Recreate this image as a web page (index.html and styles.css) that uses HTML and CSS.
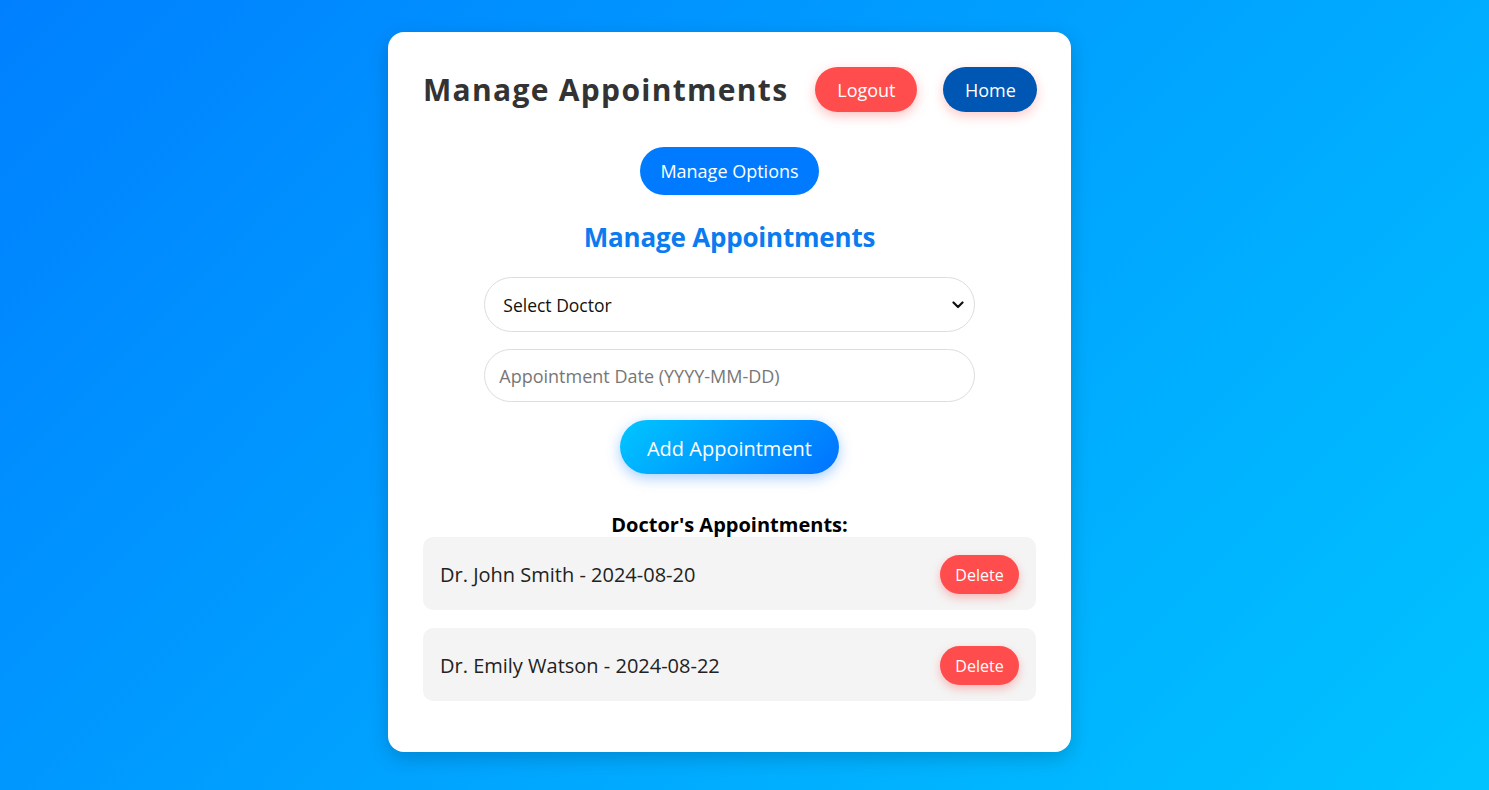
FILE: index.html
```html
<!DOCTYPE html>
<html>
<head>
<meta charset="utf-8">
<link rel="stylesheet" href="styles.css">
</head>
<body>
<div class="card">
  <div class="header">
    <h1 class="title">Manage Appointments</h1>
    <button class="btn btn-logout">Logout</button>
    <button class="btn btn-home">Home</button>
  </div>
  <button class="btn btn-options">Manage Options</button>
  <h2 class="subtitle">Manage Appointments</h2>
  <div class="form">
    <div class="select-wrap">
      <span class="select-text">Select Doctor</span>
      <svg class="chev" width="12" height="8" viewBox="0 0 12 8"><path d="M1.5 1.5 L6 6 L10.5 1.5" fill="none" stroke="#111" stroke-width="2.2" stroke-linecap="round" stroke-linejoin="round"/></svg>
    </div>
    <input class="date-input" type="text" placeholder="Appointment Date (YYYY-MM-DD)">
    <button class="btn btn-add">Add Appointment</button>
  </div>
  <h3 class="list-title">Doctor's Appointments:</h3>
  <ul class="list">
    <li class="item"><span class="item-text">Dr. John Smith - 2024-08-20</span><button class="btn btn-delete">Delete</button></li>
    <li class="item"><span class="item-text">Dr. Emily Watson - 2024-08-22</span><button class="btn btn-delete">Delete</button></li>
  </ul>
</div>
</body>
</html>
```
FILE: styles.css
```css
* { box-sizing: border-box; }
html, body { height: 100%; }
body {
  margin: 0;
  font-family: "Open Sans", "Noto Sans", sans-serif;
  background: linear-gradient(135deg, #0080ff 0%, #00c4ff 100%);
  display: flex;
  justify-content: center;
  align-items: flex-start;
  padding: 32px 30px 0 0;
}
.card {
  width: 683px;
  height: 720px;
  background: #fff;
  border-radius: 16px;
  box-shadow: 0 6px 20px rgba(0, 0, 0, 0.18);
  padding: 35px;
  display: flex;
  flex-direction: column;
  align-items: center;
}
.header {
  width: 100%;
  display: flex;
  align-items: center;
  height: 45px;
  flex-shrink: 0;
}
.title {
  margin: 0 27px 0 0;
  font-size: 30px;
  font-weight: 700;
  color: #333;
  letter-spacing: 1.3px;
  white-space: nowrap;
}
.btn {
  border: none;
  color: #fff;
  font-family: inherit;
  border-radius: 30px;
  cursor: pointer;
  flex-shrink: 0;
}
.btn-logout {
  width: 102px;
  height: 45px;
  background: #ff4d4d;
  font-size: 18px;
  box-shadow: 0 4px 12px rgba(255, 77, 77, 0.35);
  margin-right: 26px;
}
.btn-home {
  width: 94px;
  height: 45px;
  background: #0056b3;
  font-size: 18px;
  box-shadow: 0 4px 12px rgba(255, 77, 77, 0.3);
}
.btn-options {
  margin-top: 35px;
  width: 179px;
  height: 48px;
  background: #007bff;
  font-size: 18px;
}
.subtitle {
  margin: 24px 0 0;
  font-size: 26px;
  font-weight: 700;
  color: #0b7bf0;
  line-height: 36px;
  letter-spacing: -0.2px;
}
.form {
  width: 80%;
  margin-top: 22px;
  display: flex;
  flex-direction: column;
  align-items: center;
}
.select-wrap {
  width: 100%;
  height: 55px;
  border: 1px solid #ddd;
  border-radius: 30px;
  display: flex;
  align-items: center;
  justify-content: space-between;
  padding: 0 10px 0 18px;
  font-size: 17.5px;
  color: #111;
}
.date-input {
  width: 100%;
  height: 53px;
  margin-top: 17px;
  border: 1px solid #ddd;
  border-radius: 30px;
  padding: 0 14px;
  font-family: inherit;
  font-size: 18px;
  outline: none;
}
.date-input::placeholder { color: #777; }
.btn-add {
  margin-top: 18px;
  width: 219px;
  height: 54px;
  font-size: 20px;
  padding-top: 3px;
  background: linear-gradient(135deg, #00c6ff, #0072ff);
  box-shadow: 0 4px 14px rgba(0, 114, 255, 0.35);
}
.list-title {
  margin: 39px 0 0;
  font-size: 20px;
  font-weight: 700;
  color: #000;
  line-height: 24px;
}
.list {
  list-style: none;
  margin: 0;
  padding: 0;
  width: 100%;
}
.item {
  height: 73px;
  background: #f4f4f4;
  border-radius: 10px;
  margin-bottom: 18px;
  display: flex;
  align-items: center;
  justify-content: space-between;
  padding: 2px 17px 0;
}
.item-text {
  font-size: 20px;
  color: #222;
}
.btn-delete {
  width: 79px;
  height: 39px;
  background: #ff4d4d;
  font-size: 16px;
  box-shadow: 0 4px 10px rgba(255, 77, 77, 0.35);
}
```
